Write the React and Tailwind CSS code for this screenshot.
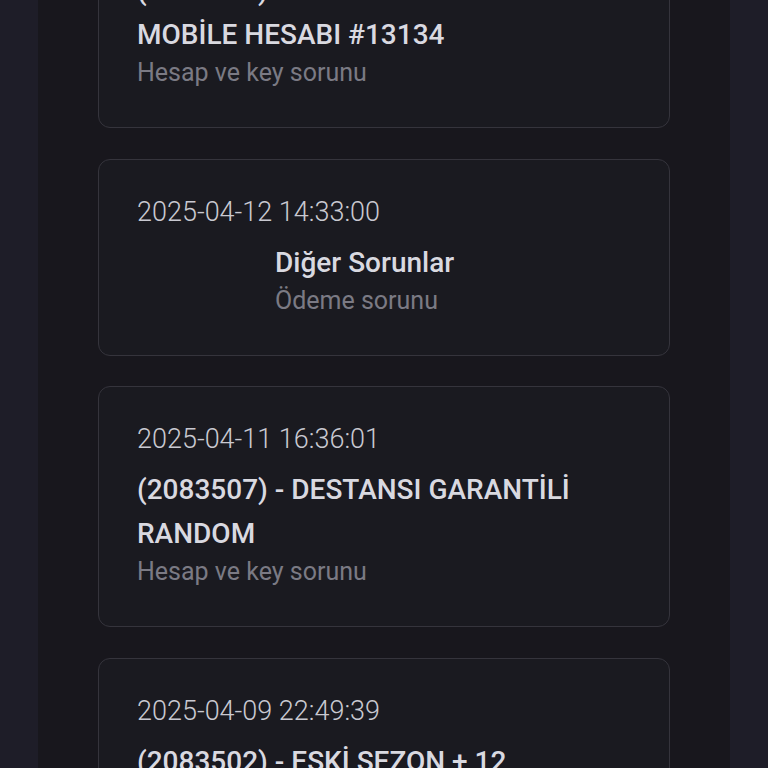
export default function App() {
  const tickets = [
    {
      date: '2025-04-13 10:12:45',
      title: '(2083519) - GARANTİLİ PUBG 130\nMOBİLE HESABI #13134',
      type: 'Hesap ve key sorunu',
    },
    {
      date: '2025-04-12 14:33:00',
      title: 'Diğer Sorunlar',
      type: 'Ödeme sorunu',
      indent: true,
    },
    {
      date: '2025-04-11 16:36:01',
      title: '(2083507) - DESTANSI GARANTİLİ RANDOM',
      type: 'Hesap ve key sorunu',
    },
    {
      date: '2025-04-09 22:49:39',
      title: '(2083502) - ESKİ SEZON + 12 KARAKTERLİ',
      type: 'Hesap ve key sorunu',
    },
  ];

  return (
    <div
      className="min-h-screen bg-[#1e1d28] overflow-hidden"
      style={{ fontFamily: 'Roboto, "Noto Sans", sans-serif' }}
    >
      <div className="mx-[38px] min-h-screen bg-[#18171d] px-[60px]">
        <div className="-mt-[113px] flex flex-col gap-[30.5px] pb-10">
          {tickets.map((t) => (
            <div
              key={t.date}
              className="rounded-[12px] border-[1.5px] border-[#35343c] bg-[#1a1a20] px-[38px] pt-[35px] pb-[38px]"
            >
              <div className="text-[27px] leading-[34px] font-light text-[#c9c9d1]">
                {t.date}
              </div>
              <div className={t.indent ? 'mt-3 pl-[138px]' : 'mt-3'}>
                <div className="whitespace-pre-line text-[28px] leading-[44px] font-medium text-[#d9d9e0]">
                  {t.title}
                </div>
                <div className="text-[25px] leading-[32px] text-[#7b7a84]">
                  {t.type}
                </div>
              </div>
            </div>
          ))}
        </div>
      </div>
    </div>
  );
}
